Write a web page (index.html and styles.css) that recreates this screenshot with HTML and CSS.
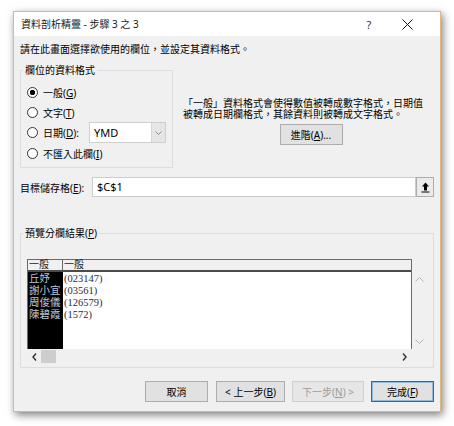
FILE: index.html
```html
<!DOCTYPE html>
<html lang="zh-Hant">
<head>
<meta charset="utf-8">
<title>資料剖析精靈</title>
<link rel="stylesheet" href="styles.css">
</head>
<body>
<div class="dialog">
  <div class="titlebar">
    <span class="title">資料剖析精靈 - 步驟 3 之 3</span>
    <span class="help">?</span>
    <span class="close"><svg width="11" height="11" viewBox="0 0 11 11"><path d="M0.5 0.5L10.5 10.5M10.5 0.5L0.5 10.5" stroke="#111" stroke-width="1" fill="none"/></svg></span>
  </div>
  <div class="content">
    <p class="intro">請在此畫面選擇欲使用的欄位，並設定其資料格式。</p>
    <div class="top-row">
      <fieldset class="group format-group">
        <legend>欄位的資料格式</legend>
        <div class="radio-row"><span class="radio checked"></span><span>一般(<u>G</u>)</span></div>
        <div class="radio-row"><span class="radio"></span><span>文字(<u>T</u>)</span></div>
        <div class="radio-row date-row"><span class="radio"></span><span>日期(<u>D</u>):</span>
          <div class="combo"><span class="combo-value">YMD</span><span class="combo-btn"><svg width="7" height="4" viewBox="0 0 7 4"><path d="M0.5 0.5L3.5 3.5L6.5 0.5" stroke="#888" fill="none"/></svg></span></div>
        </div>
        <div class="radio-row"><span class="radio"></span><span>不匯入此欄(<u>I</u>)</span></div>
      </fieldset>
      <div class="desc">
        <div class="desc-line">「一般」資料格式會使得數值被轉成數字格式，日期值</div>
        <div class="desc-line">被轉成日期欄格式，其餘資料則被轉成文字格式。</div>
        <button class="btn adv">進階(<u>A</u>)...</button>
      </div>
    </div>
    <div class="dest-row">
      <span class="dest-label">目標儲存格(<u>E</u>):</span>
      <div class="dest-input">$C$1</div>
      <button class="collapse-btn"><svg width="9" height="11" viewBox="0 0 9 11"><path d="M4.5 0.5L8 4.5H6V8.5H3V4.5H1Z" fill="#000"/><path d="M0.5 10H8.5" stroke="#000"/></svg></button>
    </div>
    <fieldset class="group preview-group">
      <legend>預覽分欄結果(<u>P</u>)</legend>
      <div class="preview">
        <div class="preview-main">
          <div class="table">
            <div class="col col1">
              <div class="hcell">一般</div>
              <div class="cells">
                <div>丘妤</div>
                <div>謝小宜</div>
                <div>周俊儀</div>
                <div>陳碧霞</div>
              </div>
            </div>
            <div class="col col2">
              <div class="hcell">一般</div>
              <div class="cells">
                <div>(023147)</div>
                <div>(03561)</div>
                <div>(126579)</div>
                <div>(1572)</div>
              </div>
            </div>
          </div>
          <div class="vscroll">
            <svg width="9" height="5" viewBox="0 0 9 5"><path d="M0.5 4.5L4.5 0.5L8.5 4.5" stroke="#b5b5b5" fill="none"/></svg>
            <svg width="9" height="5" viewBox="0 0 9 5"><path d="M0.5 0.5L4.5 4.5L8.5 0.5" stroke="#b5b5b5" fill="none"/></svg>
          </div>
        </div>
        <div class="hscroll">
          <svg class="harrow" width="5" height="8" viewBox="0 0 5 8"><path d="M4 0.5L1 4L4 7.5" stroke="#333" stroke-width="1.4" fill="none"/></svg>
          <span class="thumb"></span>
          <svg class="harrow right" width="5" height="8" viewBox="0 0 5 8"><path d="M1 0.5L4 4L1 7.5" stroke="#333" stroke-width="1.4" fill="none"/></svg>
        </div>
      </div>
    </fieldset>
    <div class="buttons">
      <button class="btn w63">取消</button>
      <button class="btn w69">&lt; 上一步(<u>B</u>)</button>
      <button class="btn w72 disabled">下一步(<u>N</u>) &gt;</button>
      <button class="btn w63 default">完成(<u>F</u>)</button>
    </div>
  </div>
</div>
</body>
</html>
```
FILE: styles.css
```css
* { box-sizing: border-box; }
html, body {
  margin: 0;
  padding: 0;
}
body {
  width: 454px;
  height: 426px;
  overflow: hidden;
  background: #ffffff;
  font-family: "Noto Sans", "Noto Sans CJK TC", sans-serif;
  font-size: 10px;
  color: #000;
}
.dialog {
  margin: 11px 0 0 13px;
  width: 428px;
  border: 1px solid #e1b87c;
  background: #f0f0f0;
  box-shadow: 2px 3px 8px rgba(0, 0, 0, 0.5);
}
.titlebar {
  height: 24px;
  background: #fff;
  display: flex;
  align-items: center;
  padding-left: 7px;
}
.title {
  flex: 1;
  color: #1a1a1a;
  line-height: 14px;
}
.help {
  width: 20px;
  text-align: center;
  font-size: 11px;
  color: #333;
  margin-right: 14px;
}
.close {
  width: 28px;
  display: flex;
  justify-content: center;
  margin-right: 19px;
}
.content {
  padding: 6px 6px 9px;
}
.intro {
  margin: 0;
  line-height: 14px;
}
.top-row {
  display: flex;
  margin-top: 7px;
}
.group {
  margin: 0;
  border: 1px solid #dcdcdc;
  min-width: 0;
}
.group legend {
  padding: 0 2px;
  margin-left: -4px;
  line-height: 14px;
}
.format-group {
  width: 153px;
  height: 105px;
  padding: 5px 6px 4px;
}
.radio-row {
  display: flex;
  align-items: center;
  height: 20px;
  white-space: nowrap;
}
.date-row {
  height: 21px;
}
.radio {
  width: 11px;
  height: 11px;
  border: 1px solid #333;
  border-radius: 50%;
  background: #fff;
  margin-right: 5px;
  flex: none;
}
.radio.checked {
  background: radial-gradient(circle, #000 0 2.4px, #fff 3px);
}
.combo {
  margin-left: auto;
  width: 77px;
  height: 21px;
  display: flex;
  border: 1px solid #cfcfcf;
  background: #fff;
}
.combo-value {
  flex: 1;
  padding-left: 4px;
  font-size: 11px;
  line-height: 19px;
}
.combo-btn {
  width: 14px;
  background: #e6e6e6;
  border-left: 1px solid #d6d6d6;
  display: flex;
  align-items: center;
  justify-content: center;
}
.desc {
  margin-left: 10px;
  margin-top: 35px;
  width: 250px;
}
.desc-line {
  height: 11px;
  line-height: 11px;
  white-space: nowrap;
}
.btn {
  font-family: "Noto Sans", "Noto Sans CJK TC", sans-serif;
  font-size: 10px;
  height: 21px;
  padding: 0;
  background: #e1e1e1;
  border: 1px solid #adadad;
  color: #000;
  white-space: nowrap;
}
.adv {
  display: block;
  width: 63px;
  margin: 4px auto 0;
  position: relative;
  left: 3px;
}
.dest-row {
  display: flex;
  align-items: center;
  height: 20px;
  margin-top: 9px;
}
.dest-label {
  width: 72px;
  flex: none;
}
.dest-input {
  flex: 1;
  height: 20px;
  background: #fff;
  border: 1px solid #cccccc;
  padding-left: 4px;
  font-size: 11px;
  line-height: 18px;
}
.collapse-btn {
  width: 18px;
  height: 20px;
  padding: 0;
  background: #ebebeb;
  border: 1px solid #adadad;
  display: flex;
  align-items: center;
  justify-content: center;
}
.preview-group {
  margin-top: 29px;
  padding: 19px 6px 3px;
}
.preview-main {
  display: flex;
}
.table {
  width: 385px;
  height: 90px;
  display: flex;
  border-left: 1px solid #6b6b6b;
  border-right: 1px solid #6b6b6b;
  background: #fff;
}
.col {
  display: flex;
  flex-direction: column;
}
.col1 {
  width: 35px;
}
.col2 {
  flex: 1;
}
.hcell {
  height: 13px;
  border-top: 1px solid #6b6b6b;
  border-bottom: 2px solid #4a4a4a;
  background: #f0f0f0;
  font-family: "Liberation Serif", "Noto Sans CJK TC", serif;
  font-size: 10px;
  line-height: 10px;
  padding-left: 1px;
  color: #222;
}
.col1 .hcell {
  border-right: 1px solid #6b6b6b;
}
.cells {
  flex: 1;
  padding-top: 1px;
  font-family: "Liberation Serif", "Noto Sans CJK TC", serif;
  font-size: 10.5px;
  line-height: 12px;
  white-space: nowrap;
}
.col1 .cells {
  background: #000;
  color: #bcc6d8;
  padding-left: 1px;
}
.col2 .cells {
  color: #2c2c3c;
  padding-left: 1px;
}
.vscroll {
  width: 15px;
  display: flex;
  flex-direction: column;
  justify-content: space-between;
  align-items: center;
  padding: 18px 0 5px;
}
.hscroll {
  width: 385px;
  height: 15px;
  display: flex;
  align-items: center;
}
.harrow {
  margin-left: 5px;
}
.thumb {
  width: 15px;
  height: 13px;
  background: #cdcdcd;
  margin-left: 4px;
}
.harrow.right {
  margin-left: auto;
  margin-right: 5px;
}
.buttons {
  display: flex;
  justify-content: flex-end;
  gap: 7px;
  margin-top: 13px;
}
.buttons .btn:first-child {
  margin-right: 1px;
}
.w63 { width: 63px; }
.w69 { width: 69px; }
.w72 { width: 72px; }
.btn.disabled {
  background: #e6e6e6;
  border-color: #cfcfcf;
  color: #9a9a9a;
}
.btn.default {
  border-color: #0078d7;
  box-shadow: inset 0 0 0 1px rgba(0, 120, 215, 0.35);
}
```
